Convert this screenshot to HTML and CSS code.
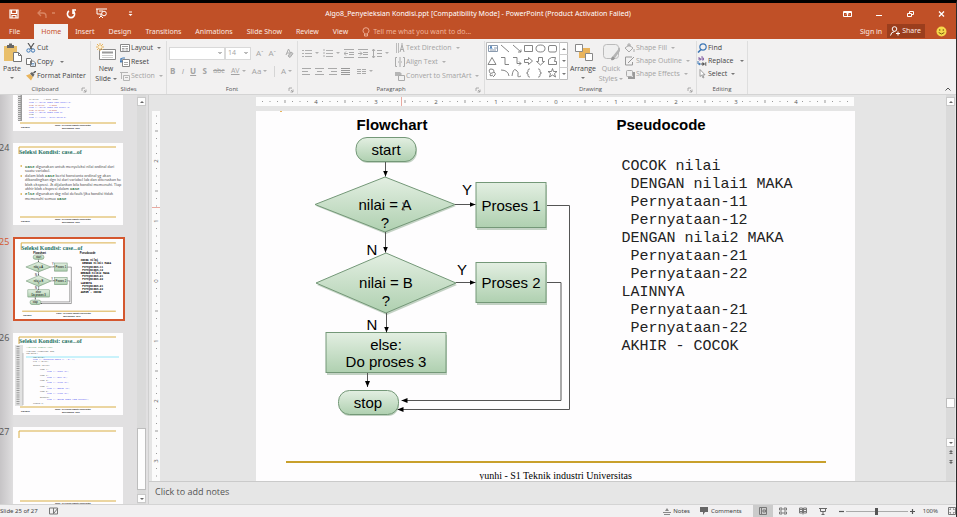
FILE: index.html
```html
<!DOCTYPE html>
<html lang="en">
<head>
<meta charset="utf-8">
<title>Algo8_Penyeleksian Kondisi.ppt - PowerPoint</title>
<link rel="stylesheet" href="styles.css">
</head>
<body>
<svg class="defs" aria-hidden="true">
  <defs>
    <linearGradient id="green" x1="0" y1="0" x2="0" y2="1">
      <stop offset="0" stop-color="#e3efe2"/><stop offset="1" stop-color="#afd0b0"/>
    </linearGradient>
    <marker id="arrow" viewBox="0 0 6 6" refX="6" refY="3" markerWidth="6" markerHeight="6" markerUnits="userSpaceOnUse" orient="auto"><path d="M0 .5 6 3 0 5.500z"/></marker>
    <g id="flowchart">
      <text class="fc-head" x="392" y="130">Flowchart</text>
      <g class="fc-shade">
        <rect x="357" y="139" width="60" height="24" rx="11"/>
        <path d="M316 206 386 179 456 206 386 234z"/>
        <path d="M317 285 387 255 457 285 387 315z"/>
        <rect x="477" y="185" width="70" height="45"/>
        <rect x="477" y="265" width="70" height="40"/>
        <rect x="327" y="335" width="120" height="40"/>
        <rect x="339" y="392" width="60" height="24" rx="11"/>
      </g>
      <g class="fc-node">
        <rect x="356" y="137.500" width="60" height="24" rx="11"/>
        <path d="M315 204.500 385 177 455 204.500 385 232z"/>
        <path d="M316 283 386 253 456 283 386 313z"/>
        <rect x="476" y="182.500" width="70" height="45"/>
        <rect x="476" y="262.500" width="70" height="40"/>
        <rect x="326" y="332.500" width="120" height="40"/>
        <rect x="338.500" y="390.500" width="60" height="24" rx="11"/>
      </g>
      <g class="fc-line">
        <path d="M385.500 162V176.500"/><path d="M385.500 232V252.500"/><path d="M386.500 313V332.500"/>
        <path d="M367.500 373V387"/><path d="M455 204.500H475.500"/><path d="M456 282.500H475.500"/>
        <path d="M547 205.500H569.500V409.500H397.500"/><path d="M547 282.500H561V400.500H401.500"/>
      </g>
      <g class="fc-text">
        <text x="386" y="155">start</text>
        <text x="385" y="210">nilai = A</text><text x="385" y="228">?</text>
        <text x="386" y="288">nilai = B</text><text x="386" y="306">?</text>
        <text x="511" y="211">Proses 1</text><text x="511" y="288">Proses 2</text>
        <text x="386" y="350">else:</text><text x="386" y="367">Do proses 3</text>
        <text x="368" y="408">stop</text>
        <text x="467" y="195">Y</text><text x="462" y="275">Y</text>
        <text x="372" y="255">N</text><text x="372" y="330">N</text>
      </g>
    </g>
    <g id="slide-frame">
      <path d="M6 11V4H103M7 74H103" fill="none" stroke="#d9ae45"/>
      <g class="t-foot"><text x="8" y="79">9/27/2011</text><text x="42" y="77">yunhi - S1 Teknik industri Universitas</text><text x="49" y="80">Mercubuana - 2011</text></g>
    </g>
    <pattern id="ticks-h" x="299" width="60" height="9" patternUnits="userSpaceOnUse"><path d="M7.500 4v1M15 4v1M22.500 4v1M30 3v3M37.500 4v1M45 4v1M52.500 4v1" stroke="#999"/></pattern>
    <pattern id="ticks-v" y="170" width="8" height="60" patternUnits="userSpaceOnUse"><path d="M4 7.500h1M4 15h1M4 22.500h1M3 30h3M4 37.500h1M4 45h1M4 52.500h1" stroke="#999"/></pattern>
  </defs>
</svg>

<header class="top">
  <div class="titlebar">
    <div class="qat">
      <button aria-label="Save"><svg width="10" height="10" viewBox="0 0 10 10"><path d="M1 1h8v8H1zM2.500 1v3.500h5V1M3 9V6.500h4V9" fill="none" stroke="#fff" stroke-width="1.200"/></svg></button>
      <button class="q-undo" aria-label="Undo"><svg width="18" height="10" viewBox="0 0 18 10"><path d="M4 1 1 4l3 3M1 4h5q3 0 3 3v2M15 4h3" fill="none" stroke="#d98563" stroke-width="1.300"/></svg></button>
      <button class="q-redo" aria-label="Repeat"><svg width="10" height="10" viewBox="0 0 10 10"><path d="M3 2A3.600 3.600 0 1 0 7 2M7 5V1h3" fill="none" stroke="#fff" stroke-width="1.600"/></svg></button>
      <button class="q-show" aria-label="Start slide show"><svg width="11" height="11" viewBox="0 0 11 11"><path d="M0 1h11M1 1v5h5M3 3h4M5 6v2M3 10l2-2 2 2" fill="none" stroke="#fff"/><circle cx="8" cy="5.500" r="2.300" fill="none" stroke="#fff"/></svg></button>
      <button class="q-more" aria-label="Customize toolbar"><svg width="5" height="6" viewBox="0 0 5 6"><path d="M1 1h3" stroke="#fff"/><path d="M.5 3h4l-2 2z" fill="#fff"/></svg></button>
    </div>
    <h1>Algo8_Penyeleksian Kondisi.ppt [Compatibility Mode] - PowerPoint (Product Activation Failed)</h1>
    <div class="winbtns">
      <button aria-label="Ribbon display options"><svg width="9" height="8" viewBox="0 0 9 8"><path d="M.5 1.500h8v5h-8zM.5 2.500h8M4.500 6V3M3 4.500 4.500 3 6 4.500" fill="none" stroke="#fff"/></svg></button>
      <button aria-label="Minimize"><svg width="7" height="8" viewBox="0 0 7 8"><path d="M0 5.500h6" stroke="#fff"/></svg></button>
      <button aria-label="Restore"><svg width="7" height="8" viewBox="0 0 7 8"><path d="M.5 3.500h4v3h-4zM2.500 3V1.500h4v3H5" fill="none" stroke="#fff"/></svg></button>
      <button aria-label="Close"><svg width="7" height="8" viewBox="0 0 7 8"><path d="M1 1.500l5 5M6 1.500l-5 5" stroke="#fff" stroke-width="1.300"/></svg></button>
    </div>
  </div>
  <nav class="tabs">
    <button class="file">File</button><button class="on">Home</button><button>Insert</button><button>Design</button><button>Transitions</button><button>Animations</button><button>Slide Show</button><button>Review</button><button>View</button>
    <label class="tell"><svg width="8" height="10" viewBox="0 0 8 10"><path d="M2.500 6.500Q1 5 1 3.700a3 3 0 0 1 6 0Q7 5 5.500 6.500V9h-3zM2.500 7h3" fill="none" stroke="#f0b49b" stroke-width=".9"/></svg><input type="text" placeholder="Tell me what you want to do..."></label>
    <a class="signin" href="#">Sign in</a>
    <button class="share"><svg width="10" height="10" viewBox="0 0 10 10"><circle cx="4.500" cy="3" r="2.300" fill="none" stroke="#fff"/><path d="M.5 9.500Q1 6 4.500 5.500M6 7.500h4M8 5.500v4" fill="none" stroke="#fff"/></svg>Share</button>
    <svg class="smile" width="11" height="11" viewBox="0 0 11 11"><circle cx="5.500" cy="5.500" r="5" fill="#f6d84a"/><circle cx="3.700" cy="4" r=".8" fill="#7a5a10"/><circle cx="7.300" cy="4" r=".8" fill="#7a5a10"/><path d="M2.700 6.500Q5.500 9.500 8.300 6.500" fill="none" stroke="#7a5a10"/></svg>
  </nav>
</header>

<section class="ribbon">
  <div class="group clip">
    <div class="tools">
      <button class="big"><svg width="19" height="20" viewBox="0 0 19 20"><rect x="1" y="3" width="13" height="15" fill="#e9bf6b"/><path d="M4 2h7v3H4zM6 .5h3V2H6z" fill="#666"/><path d="M10.500 9.500h5l3 3v6h-8z" fill="#fff" stroke="#777"/><path d="M15.500 9.500v3h3" fill="none" stroke="#777"/></svg><span>Paste</span><i></i></button>
      <div class="stack">
        <button><svg viewBox="0 0 10 10"><path d="M2 0l4 6M8 0 4 6" stroke="#555" stroke-width="1.200"/><circle cx="2.500" cy="7.500" r="1.700" fill="none" stroke="#3f78b5"/><circle cx="7" cy="7.500" r="1.700" fill="none" stroke="#3f78b5"/></svg>Cut</button>
        <button><svg viewBox="0 0 10 10"><path d="M.5 1.500h4l1 1v5h-5zM4.500 4h3l2 2v3.500h-5z" fill="#fff" stroke="#777"/><path d="M5.500 6.500h3M5.500 8h3" stroke="#3f78b5" stroke-width=".7"/></svg>Copy<i class="far"></i></button>
        <button><svg viewBox="0 0 10 10"><path d="M0 4.500 4 3l3 3-2 3.500z" fill="#e9b45c"/><path d="M4 2.500 6 1l2.500 2.500L7 6z" fill="#666"/><path d="M7.500 2 10 0" stroke="#555" stroke-width="1.500"/></svg>Format Painter</button>
      </div>
    </div>
    <h2>Clipboard</h2><svg class="launch" viewBox="0 0 6 6"><use href="#launcher"/></svg>
  </div>
  <div class="group slides">
    <div class="tools">
      <button class="big"><svg width="20" height="20" viewBox="0 0 20 20"><path d="M3.500 6.500h16v10h-16z" fill="#fff" stroke="#888"/><path d="M6 9.500h11" stroke="#999" stroke-width="2"/><path d="M6 12.500h11M6 14.500h11" stroke="#ccc"/><path d="M4 0v8M0 4h8M1 1l6 6M7 1 1 7" stroke="#e9b45c"/><circle cx="4" cy="4" r="1.500" fill="#fff3d6"/></svg><span>New<br>Slide <i></i></span></button>
      <div class="stack">
        <button><svg viewBox="0 0 10 10"><path d="M.5 1.500h9v7h-9z" fill="#fff" stroke="#888"/><path d="M2 3.500h6M2 5.500h2.500M5.500 5.500H8M2 7h2.500M5.500 7H8" stroke="#888" stroke-width=".8"/></svg>Layout<i></i></button>
        <button><svg viewBox="0 0 10 10"><path d="M2.500 2.500h7v7h-7z" fill="#fff" stroke="#888"/><path d="M4 5.500h4M4 7.500h4" stroke="#aaa"/><path d="M1 5V2.500Q1 1 3 1h2M1 1v4M0 4l1 1.500L2.500 4" fill="none" stroke="#3f78b5"/></svg>Reset</button>
        <button class="off"><svg viewBox="0 0 10 10"><path d="M3.500 4.500h6v5h-6zM0 1.500h8M1.500 2v6" fill="none" stroke="#b5b5b5"/><path d="M5 6.500h3" stroke="#b5b5b5"/></svg>Section<i></i></button>
      </div>
    </div>
    <h2>Slides</h2>
  </div>
  <div class="group font">
    <div class="tools col">
      <div class="line">
        <select class="face" aria-label="Font"><option></option></select><select class="size" aria-label="Font size"><option>14</option></select>
        <button class="g8">A<sup>ˆ</sup></button><button class="g8">A<sup>ˇ</sup></button>
        <button class="clear" aria-label="Clear formatting"><svg width="9" height="10" viewBox="0 0 9 10"><path d="M1 7 3.500 1 6 6M2 5h3" fill="none" stroke="#aaa"/><path d="M3 8l3-4 2 1.500-3 4z" fill="#c8c8c8" stroke="#aaa"/></svg></button>
      </div>
      <div class="line glyphs">
        <button><b>B</b></button><button><em>I</em></button><button><u><b>U</b></u></button><button><b>S</b></button><button><s>abc</s></button><button><u>AV</u><i></i></button><button>Aa<i></i></button><span class="bar"></span><button>A<i></i></button>
      </div>
    </div>
    <h2>Font</h2><svg class="launch" viewBox="0 0 6 6"><use href="#launcher"/></svg>
  </div>
  <div class="group para">
    <div class="tools">
      <div class="col paracol">
        <div class="line">
          <button aria-label="Bullets"><svg width="10" height="9" viewBox="0 0 10 9"><path d="M0 1.500h2M0 4.500h2M0 7.500h2M3 1.500h7M3 4.500h7M3 7.500h7" stroke="#b0b0b0"/></svg><i></i></button>
          <button aria-label="Numbering"><svg width="10" height="9" viewBox="0 0 10 9"><path d="M1 0v9" stroke="#b0b0b0" stroke-dasharray="2 1"/><path d="M3 1.500h7M3 4.500h7M3 7.500h7" stroke="#b0b0b0"/></svg><i></i></button>
          <button aria-label="Decrease indent"><svg width="10" height="9" viewBox="0 0 10 9"><path d="M0 .5h10M5 3.500h5M5 5.500h5M0 8.500h10M4 4.500H0M2 2.500l-2 2 2 2" fill="none" stroke="#aaa"/></svg></button>
          <button aria-label="Increase indent"><svg width="10" height="9" viewBox="0 0 10 9"><path d="M0 .5h10M5 3.500h5M5 5.500h5M0 8.500h10M0 4.500h4M2 2.500l2 2-2 2" fill="none" stroke="#aaa"/></svg></button>
          <button aria-label="Line spacing"><svg width="10" height="9" viewBox="0 0 10 9"><path d="M1.500 0v9M0 2l1.500-2L3 2M0 7l1.500 2L3 7M5 1.500h5M5 4.500h5M5 7.500h5" fill="none" stroke="#aaa"/></svg><i></i></button>
        </div>
        <div class="line aligns">
          <button aria-label="Align left"><svg width="9" height="7" viewBox="0 0 9 7"><path d="M0 .5h9M0 3.500h6M0 6.500h8" stroke="#aaa"/></svg></button>
          <button aria-label="Center"><svg width="9" height="7" viewBox="0 0 9 7"><path d="M0 .5h9M2 3.500h5M0 6.500h9" stroke="#aaa"/></svg></button>
          <button aria-label="Align right"><svg width="9" height="7" viewBox="0 0 9 7"><path d="M0 .5h9M3 3.500h6M1 6.500h8" stroke="#aaa"/></svg></button>
          <button aria-label="Justify"><svg width="9" height="7" viewBox="0 0 9 7"><path d="M0 .5h9M0 2.500h9M0 4.500h9M0 6.500h9" stroke="#999"/></svg></button>
          <button class="cols" aria-label="Columns"><svg width="9" height="7" viewBox="0 0 9 7"><path d="M0 1.500h4M5 1.500h4M0 3.500h4M5 3.500h4M0 5.500h4M5 5.500h4" stroke="#aaa"/></svg><i></i></button>
        </div>
      </div>
      <div class="stack off">
        <button><svg viewBox="0 0 10 10"><path d="M1.500 0v10M3.500 0v10" stroke="#bbb"/><path d="M5 9 7 2l2 7M5.500 6.500h3M7 0v2" fill="none" stroke="#aaa"/></svg>Text Direction<i></i></button>
        <button><svg viewBox="0 0 10 10"><path d="M2 .5H.5v9H2M8 .5h1.500v9H8M5 0v4M5 6v4M3 5h4" fill="none" stroke="#aaa"/></svg>Align Text<i></i></button>
        <button><svg viewBox="0 0 10 10"><path d="M0 1h5l2 2-2 2H0z" fill="#b5b5b5"/><path d="M3.500 4.500h6v5h-6z" fill="#f1f1f1" stroke="#aaa"/></svg>Convert to SmartArt<i></i></button>
      </div>
    </div>
    <h2>Paragraph</h2><svg class="launch" viewBox="0 0 6 6"><use href="#launcher"/></svg>
  </div>
  <div class="group draw">
    <div class="tools">
      <svg class="gallery" width="82" height="38" viewBox="0 0 82 38">
        <path d="M.5.500h81v37H.5z" fill="#fff" stroke="#bbb"/>
        <path d="M73.500 0v38M73 12.500h9M73 25.500h9" stroke="#ccc"/>
        <path d="M76 8h4l-2-2zM76 18h4l-2 2zM76 30h4M76 31h4l-2 2z" fill="#777"/>
        <g fill="none" stroke="#777" stroke-width=".9"><path d="M2.500 3.500h9v6h-9zM8 6h3M4 8h6" stroke="#7d8fa5"/><path d="M4 7l1-3 1 3" stroke="#3f78b5"/><path d="M15 3l8 7M27 3l8 7M35 7.500V10h-3M38.500 3.500h8v6h-8z"/><ellipse cx="54.500" cy="6.500" rx="4.500" ry="3.500"/><rect x="62.500" y="3.500" width="8" height="6.500" rx="1.500"/>
        <path d="M2 22.500 6 15.500l4 7zM15 15.500h4v7h4M27 15.500h4v6h4M33 19.500l2 2-2 2M38.500 17.500h4v-2l4 3.500-4 3.500v-2h-4zM52.500 15.500h4v4h2l-4 3.500-4-3.500h2zM62.500 22.500v-5l3-2h4l-1 4h2v3z"/>
        <path d="M4 31q-2-4 1-4t3 2-2 2-2 2 3 0M8 30q2 1 1 3l-2 2M15 28q7 0 8 6M26 34q1-8 4-6t2 5 3 1M44 27h-.5q-1.500 0-1.500 1.500v1.500l-1.500 1 1.500 1v1.500q0 1.500 1.500 1.500h.5M52 27h.5q1.500 0 1.500 1.500v1.500l1.500 1-1.500 1v1.500q0 1.500-1.500 1.500h-.5M66.500 26.500l1 3h3.500l-2.500 2 1 3.500-3-2-3 2 1-3.500-2.500-2h3.500z"/></g>
      </svg>
      <button class="big arrange"><svg width="19" height="20" viewBox="0 0 19 20"><path d="M5 5h11v10H5z" fill="#e9b45c"/><path d="M1.500 1.500h7v7h-7zM11.500 10.500h7v7h-7z" fill="#fff" stroke="#888"/></svg><span>Arrange</span><i></i></button>
      <button class="big off"><svg width="19" height="20" viewBox="0 0 19 20"><rect x="1.500" y="1.500" width="15" height="14" rx="3" fill="#efefef" stroke="#bbb"/><path d="M18 4 11 13l2 2 5-7z" fill="#b5b5b5"/><path d="M11 13q-2 1-2 4 3 1 4-2z" fill="#999"/></svg><span>Quick<br>Styles <i></i></span></button>
      <div class="stack off tight">
        <button><svg viewBox="0 0 10 10"><path d="M4 2l4 3-4 4-4-4zM3 4V1h2v3M9 6v3" fill="none" stroke="#aaa"/></svg>Shape Fill<i></i></button>
        <button><svg viewBox="0 0 10 10"><path d="M7 1H.5v8h7V6M3 7l6-6" fill="none" stroke="#999"/></svg>Shape Outline<i></i></button>
        <button><svg viewBox="0 0 10 10"><path d="M3 9h6V3" fill="none" stroke="#999" stroke-width="2"/><rect x="1.500" y="1.500" width="6" height="6" rx="1" fill="#eee" stroke="#aaa"/></svg>Shape Effects<i></i></button>
      </div>
    </div>
    <h2>Drawing</h2><svg class="launch" viewBox="0 0 6 6"><use href="#launcher"/></svg>
  </div>
  <div class="group edit">
    <div class="tools">
      <div class="stack tight">
        <button><svg viewBox="0 0 10 10"><circle cx="6" cy="4" r="3.200" fill="none" stroke="#3f78b5" stroke-width="1.200"/><path d="M4 6.500 1 9.500" stroke="#3f78b5" stroke-width="1.600"/></svg>Find</button>
        <button><svg viewBox="0 0 10 10"><path d="M2 1v3h1.500V2.500H2M5 0v4h1.500V2H5" fill="none" stroke="#8a6aa8"/><path d="M1 5v3h2M2 7l1.500 1L2 9" fill="none" stroke="#3f78b5"/><path d="M5 7h1.500v2H5zM9.500 7H8v2h1.500" fill="none" stroke="#555"/></svg>Replace<i class="far"></i></button>
        <button><svg viewBox="0 0 10 10"><path d="M3 .5v7l1.700-1.500L6 9l1-.5-1.300-2.700H8z" fill="#fff" stroke="#888" stroke-width=".8"/></svg>Select<i></i></button>
      </div>
    </div>
    <h2>Editing</h2>
  </div>
  <button class="collapse" aria-label="Collapse ribbon"><svg width="6" height="4" viewBox="0 0 6 4"><path d="M.5 3.500 3 1l2.500 2.500" fill="none" stroke="#555"/></svg></button>
  <svg class="defs"><defs><path id="launcher" d="M1 4V1h3M3 3l2 2M5 2.500V5H2.500" fill="none" stroke="#999" stroke-width=".8"/></defs></svg>
</section>

<main class="work">
  <aside class="pane">
    <ol class="thumbs">
      <li><span></span><svg viewBox="0 0 110 82"><use href="#slide-frame"/><path d="M7 12v60" stroke="#999" stroke-width="4"/><path d="M6 12v60" stroke="#ddd" stroke-width="3" stroke-dasharray="1 1"/>
        <g class="t-code"><text x="16" y="51">if nilai == 1 then 'Satu'</text><text x="16" y="54" class="bl">cout &lt;&lt; "nilai angka satu sekali n"</text><text x="16" y="57" class="rd">else if nilai == 2 then</text><text x="16" y="59" class="bl">cout &lt;&lt; "nilai angka dua sekali n"</text><text x="16" y="62" class="rd">else if nilai == 3 then</text><text x="16" y="64" class="bl">cout &lt;&lt; "Nilai angka tiga n"</text><text x="16" y="66">else</text><text x="16" y="69" class="bl">cout &lt;&lt; "Akhir - nilai salah n"</text></g></svg></li>
      <li><span>24</span><svg viewBox="0 0 110 82"><use href="#slide-frame"/><text class="t-title" x="6" y="11">Seleksi Kondisi: case...of</text>
        <path d="M7.500 23h1.500M7.500 33h1.500M7.500 51h1.500" stroke="#d9ae45" stroke-width="1.500"/>
        <g class="t-body"><text x="12" y="25"><tspan>case</tspan> digunakan untuk menyeleksi nilai ordinal dari</text><text x="12" y="29">suatu variabel.</text><text x="12" y="34">dalam blok <tspan>case</tspan> berisi konstanta ordinal yg akan</text><text x="12" y="38">dibandingkan dgn isi dari variabel lab dan diteruskan ke</text><text x="12" y="43">blok ekspresi. Jk dijalankan bila kondisi memenuhi. Tiap</text><text x="12" y="47">akhir blok ekspresi dalam <tspan>case</tspan></text><text x="12" y="52"><tspan>else</tspan> digunakan sbg nilai default/jika kondisi tidak</text><text x="12" y="57">memenuhi semua <tspan>case</tspan></text></g></svg></li>
      <li class="sel"><span>25</span><svg viewBox="0 0 110 82"><use href="#slide-frame"/><text class="t-title" x="6" y="11">Seleksi Kondisi: case...of</text>
        <g class="mini" transform="scale(.183) translate(-256 -48)"><use href="#flowchart"/><text class="mini-head" x="617" y="130">Pseudocode</text>
          <g class="mini-code"><text x="622" y="172">COCOK nilai</text><text x="631" y="190">DENGAN nilai1 MAKA</text><text x="631" y="208">Pernyataan-11</text><text x="631" y="226">Pernyataan-12</text><text x="622" y="244">DENGAN nilai2 MAKA</text><text x="631" y="262">Pernyataan-21</text><text x="631" y="280">Pernyataan-22</text><text x="622" y="298">LAINNYA</text><text x="631" y="316">Pernyataan-21</text><text x="631" y="334">Pernyataan-22</text><text x="622" y="352">AKHIR - COCOK</text></g></g></svg></li>
      <li><span>26</span><svg viewBox="0 0 110 82"><use href="#slide-frame"/><text class="t-title" x="6" y="10">Seleksi Kondisi: case...of</text><path d="M6 12v61" stroke="#e2e2e2" stroke-width="8"/><path d="M5 13v59" stroke="#999" stroke-width="3" stroke-dasharray="1 1.200"/><path d="M10 20v52" stroke="#999" stroke-width=".6"/><path d="M13 24h93" stroke="#c9f2fb" stroke-width="2"/>
        <g class="t-code"><text x="13" y="15" class="gr">//Seleksi Kondisi case</text><text x="13" y="19">#include &lt;iostream&gt; std;</text><text x="13" y="21">int main()</text><text x="20" y="25">int nilai;</text><text x="20" y="27" class="bl">cout &lt;&lt; "Masukkan angka (1 - 5) :";</text><text x="20" y="29">cin &gt;&gt; nilai;</text><text x="20" y="33">switch (nilai)</text><text x="27" y="37">case 1:</text><text x="34" y="39" class="bl">cout &lt;&lt; "Satu \n";</text><text x="27" y="43">case 2:</text><text x="34" y="45" class="bl">cout &lt;&lt; "Dua \n";</text><text x="27" y="48">case 3:</text><text x="34" y="50" class="bl">cout &lt;&lt; "Tiga \n";</text><text x="27" y="54">case 4:</text><text x="34" y="56" class="bl">cout &lt;&lt; "Empat \n";</text><text x="27" y="59">case 5:</text><text x="34" y="61" class="bl">cout &lt;&lt; "Lima \n";</text><text x="27" y="65">default:</text><text x="34" y="67" class="bl">cout &lt;&lt; "Bukan angka yang dikenal";</text><text x="20" y="71">return 0;</text></g></svg></li>
      <li><span>27</span><svg viewBox="0 0 110 82"><use href="#slide-frame"/></svg></li>
    </ol>
    <div class="scroll"><button aria-label="Scroll up"><b class="up"></b></button><div class="track"><div class="knob"></div></div><button aria-label="Scroll down"><b class="down"></b></button></div>
  </aside>

  <section class="editor">
    <div class="canvas">
      <svg class="vruler" width="8" height="370" viewBox="0 0 8 370"><path d="M0 0h8v370H0z" fill="#fbfbfb"/><path d="M0 0h8v370H0z" fill="url(#ticks-v)"/><path d="M0 96.500h8" stroke="#e9a9a0"/>
        <g class="rnum"><text transform="translate(6 50) rotate(-90)">2</text><text transform="translate(6 110) rotate(-90)">1</text><text transform="translate(6 170) rotate(-90)">0</text><text transform="translate(6 230) rotate(-90)">1</text><text transform="translate(6 290) rotate(-90)">2</text><text transform="translate(6 350) rotate(-90)">3</text></g></svg>
      <div class="stage">
        <svg class="hruler" width="598" height="9" viewBox="0 0 598 9"><path d="M0 0h598v9H0z" fill="#fcfcfc"/><path d="M0 0h598v9H0z" fill="url(#ticks-h)"/><path d="M145.500 0v9" stroke="#e9a9a0"/>
          <g class="rnum"><text x="60" y="7">4</text><text x="120" y="7">3</text><text x="180" y="7">2</text><text x="240" y="7">1</text><text x="300" y="7">0</text><text x="360" y="7">1</text><text x="420" y="7">2</text><text x="480" y="7">3</text><text x="540" y="7">4</text></g></svg>
        <article class="slide">
          <svg class="chart" width="361" height="350" viewBox="256 111 361 350"><use href="#flowchart"/><path d="M280 111h2v1h-2z" fill="#e9b45c"/><path d="M402 203h3M403.500 203v7M402 210h3" stroke="#555" stroke-width=".8" fill="none"/></svg>
          <div class="pseudo">
            <h3>Pseudocode</h3>
<pre>COCOK nilai
 DENGAN nilai1 MAKA
 Pernyataan-11
 Pernyataan-12
DENGAN nilai2 MAKA
 Pernyataan-21
 Pernyataan-22
LAINNYA
 Pernyataan-21
 Pernyataan-22
AKHIR - COCOK</pre>
          </div>
          <footer>yunhi - S1 Teknik industri Universitas</footer>
        </article>
      </div>
      <div class="scroll main"><button aria-label="Scroll up"><b class="up"></b></button><div class="track"><div class="knob"></div></div><button aria-label="Scroll down"><b class="down"></b></button>
        <button class="nav" aria-label="Previous slide"><b class="up"></b><b class="up"></b></button><button class="nav" aria-label="Next slide"><b class="down"></b><b class="down"></b></button></div>
    </div>
    <div class="notes">Click to add notes</div>
  </section>
</main>

<footer class="status">
  <span>Slide 25 of 27</span>
  <svg class="proof" width="10" height="8" viewBox="0 0 10 8"><path d="M.5 1h4v6h-4zM4.500 1h4v6h-4zM5 6l4-5" fill="none" stroke="#777"/></svg>
  <button class="s-notes"><svg width="8" height="7" viewBox="0 0 8 7"><path d="M0 4.500h8M1 6.500h6" stroke="#888"/><path d="M2 3h4L4 0z" fill="#888"/></svg>Notes</button>
  <button class="s-comments"><svg width="8" height="8" viewBox="0 0 8 8"><path d="M0 0h8v5H5L3 8V5H0z" fill="#666"/></svg>Comments</button>
  <div class="views">
    <button class="on" aria-label="Normal"><svg width="8" height="8" viewBox="0 0 8 8"><path d="M.5.500h7v7h-7zM2.500 1v6M4 3h2.500v2H4z" fill="none" stroke="#777"/></svg></button>
    <button aria-label="Slide sorter"><svg width="8" height="8" viewBox="0 0 8 8"><path d="M.5 1h2.500v2H.5zM5 1h2.500v2H5zM.5 5h2.500v2H.5zM5 5h2.500v2H5z" fill="none" stroke="#777"/></svg></button>
    <button aria-label="Reading view"><svg width="8" height="8" viewBox="0 0 8 8"><path d="M.5 1h3v5h-3zM4.500 1h3v5h-3zM4 1v6.500M1 2.500h2M1 4.500h2M5 2.500h2M5 4.500h2" fill="none" stroke="#777"/></svg></button>
    <button aria-label="Slide show"><svg width="8" height="8" viewBox="0 0 8 8"><path d="M0 1.500h8M1.500 2v2.500h5V2M4 5v2M2.500 7.500h3" fill="none" stroke="#666"/></svg></button>
  </div>
  <button aria-label="Zoom out"><svg width="5" height="5" viewBox="0 0 5 5"><path d="M0 2.500h5" stroke="#555" stroke-width="1.200"/></svg></button>
  <input type="range" aria-label="Zoom" min="0" max="100" value="50">
  <button aria-label="Zoom in"><svg width="5" height="5" viewBox="0 0 5 5"><path d="M0 2.500h5M2.500 0v5" stroke="#555" stroke-width="1.200"/></svg></button>
  <span class="pct">100%</span>
  <button aria-label="Fit slide"><svg width="8" height="8" viewBox="0 0 8 8"><path d="M.5.500h7v7h-7zM2 3V2h1M5 2h1v1M6 5v1H5M3 6H2V5" fill="none" stroke="#777"/></svg></button>
</footer>
</body>
</html>
```
FILE: styles.css
```css
* { box-sizing: border-box; }
body {
  margin: 0;
  height: 100vh;
  display: flex;
  flex-direction: column;
  overflow: hidden;
  border-top: 3px solid #000;
  border-right: 1px solid #2c2c2c;
  background: #e5e5e5;
  color: #444;
  font-family: "Open Sans", "Noto Sans", sans-serif;
  font-size: 7px;
  line-height: 10px;
}
button, input, select { margin: 0; padding: 0; border: 0; background: none; color: inherit; font: inherit; }
button { display: flex; align-items: center; white-space: nowrap; }
h1, h2, h3, pre, ol { margin: 0; padding: 0; font-weight: 400; font-size: inherit; }
svg { flex: none; display: block; }
.defs { position: absolute; width: 0; height: 0; }
i { flex: none; display: inline-block; border: 2px solid transparent; border-top-color: #777; border-bottom: 0; margin-left: 3px; vertical-align: middle; }
i.far { margin-left: 6px; }

/* title bar and tabs */
.top { background: #c05027; color: #fbe9e2; font-family: "Noto Sans", "Open Sans", sans-serif; }
.titlebar { display: grid; grid-template-columns: 1fr auto 1fr; align-items: center; height: 21px; }
.titlebar h1 { font-size: 7px; color: #fff; }
.qat { display: flex; align-items: center; padding-left: 9px; }
.q-undo { margin-left: 18px; }
.q-redo { margin-left: 11px; }
.q-show { margin-left: 20px; }
.q-more { margin-left: 21px; }
.winbtns { display: flex; justify-content: flex-end; gap: 24px; padding-right: 11px; }
.tabs { display: flex; align-items: stretch; height: 15px; }
.tabs > button { padding: 0 7px; }
.tabs .file { padding: 0 14px 0 9px; }
.tabs .on { background: #f4f2f2; color: #c8512a; }
.tell { display: flex; align-items: center; gap: 3px; flex: 1; margin-left: 7px; }
.tell input { flex: 1; min-width: 0; outline: 0; }
.tell input::placeholder { color: #f0b49b; opacity: 1; }
.signin { color: inherit; text-decoration: none; align-self: center; margin-right: 5px; }
.tabs .share { background: #9b3e1d; gap: 2px; padding: 0 4px 0 3px; margin-bottom: 1px; }
.smile { align-self: center; margin: 0 9px 0 11px; }

/* ribbon */
.ribbon { position: relative; display: flex; height: 56px; padding-top: 2px; background: #f2f1f1; border-bottom: 1px solid #d4d4d4; }
.group { position: relative; display: grid; grid-template-rows: 43px 10px; border-right: 1px solid #dedede; }
.group h2 { padding-top: 1px; text-align: center; font-size: 6px; line-height: 8px; color: #555; }
.launch { position: absolute; right: 3px; bottom: 1px; width: 6px; height: 6px; }
.clip { width: 91px; }
.slides { width: 76px; }
.font { width: 131px; }
.para { width: 187px; }
.draw { width: 212px; }
.edit { width: 51px; }
.tools { display: flex; }
.tools.col, .col { display: flex; flex-direction: column; }
.big { flex-direction: column; width: 24px; padding-top: 2px; line-height: 10px; text-align: center; }
.big > span { padding-top: 1px; }
.big > i { margin: 3px 0 0; }
.big span i { margin-left: 0; }
.slides .big { width: 28px; margin-left: 1px; }
.stack button { height: 14px; gap: 1px; }
.stack svg { width: 10px; height: 10px; }
.stack.tight button { height: 13px; }
.clip .stack { padding-left: 2px; }
.off, .font, .aligns { color: #a3a3a3; }
.off i, .font i, .paracol i { border-top-color: #b0b0b0; }
.line { display: flex; align-items: center; height: 22px; }
.font .col { padding: 1px 0 0 2px; }
.line select { appearance: none; height: 13px; border: 1px solid #d9d9d9; background: #fff; font-size: 7px; padding-left: 2px;
  background-image: linear-gradient(45deg, transparent 50%, #bbb 50%), linear-gradient(-45deg, transparent 50%, #bbb 50%);
  background-size: 2px 2px; background-repeat: no-repeat; background-position: right 4px center, right 2px center; }
.face { width: 56px; }
.size { width: 26px; }
.g8 { font-size: 8px; margin-left: 5px; }
.g8 sup { font-size: 6px; line-height: 6px; }
.clear { margin-left: 9px; }
.font .glyphs { font-size: 8px; height: 14px; justify-content: space-between; padding: 0 5px 0 1px; }
.glyphs s, .glyphs button:nth-child(6) { font-size: 7px; }
.glyphs i { margin-left: 2px; }
.bar { width: 1px; height: 11px; background: #d5d5d5; }
.paracol { width: 97px; padding: 1px 0 0 4px; }
.paracol .line { gap: 4px; }
.paracol .aligns { height: 14px; }
.paracol .cols { margin-left: 3px; }
.gallery { margin: 1px 0 0 1px; }
.arrange { width: 30px; }
.draw .big + .big { width: 26px; }
.draw .stack { padding-left: 1px; }
.collapse { position: absolute; right: 5px; bottom: 3px; }

/* workspace */
.work { flex: 1; display: flex; min-height: 0; }
.pane { width: 149px; display: flex; justify-content: space-between; overflow: hidden; background: linear-gradient(to right, #c6c4c6, #e1e0e1 14px); border-right: 1px solid #cfcfcf; padding-right: 2px; }
.thumbs { list-style: none; margin-top: -46px; display: flex; flex-direction: column; gap: 12px; }
.thumbs li { display: flex; flex: none; }
.thumbs span { width: 13px; font-size: 9px; line-height: 10px; color: #555; text-indent: -1px; }
.thumbs svg { width: 110px; height: 82px; background: #fefdfe; }
.thumbs .sel svg { width: 112px; height: 84px; border: 2px solid #d4572f; }
.thumbs .sel span { color: #d4572f; }
.t-title { font: bold 6px "Liberation Serif", serif; fill: #1e7263; }
.t-body { font: 4px Lato, sans-serif; fill: #555; }
.t-body tspan { font-family: "Liberation Mono", monospace; font-weight: 700; fill: #1d6b3a; }
.t-foot { font: bold 2px "Liberation Sans", sans-serif; fill: #222; }
.t-code { font: 2px "Liberation Mono", monospace; fill: #444; }
.bl { fill: #3c3cf0; }
.rd { fill: #a33; }
.gr { fill: #5a9a5a; }
.mini { stroke-width: 3px; }
.mini-head { font: bold 15px "Liberation Sans", sans-serif; fill: #000; }
.mini-code { font: bold 15px "Liberation Mono", monospace; fill: #000; }

.scroll { width: 9px; display: flex; flex-direction: column; padding: 2px 0 1px; background: #dadada; }
.scroll button { height: 9px; justify-content: center; background: #fdfdfd; border: 1px solid #c9c9c9; }
.track { flex: 1; display: flex; flex-direction: column; justify-content: flex-end; padding-bottom: 4px; }
.knob { height: 62px; background: #fdfdfd; border: 1px solid #bdbdbd; }
.up, .down { border: 2px solid transparent; }
.up { border-top: 0; border-bottom-color: #666; }
.down { border-bottom: 0; border-top-color: #666; }
.scroll.main { margin-right: 1px; padding-bottom: 14px; }
.scroll.main .track { padding-bottom: 30px; }
.scroll.main .knob { height: 10px; }
.scroll .nav { background: none; border: 0; flex-direction: column; height: 10px; }

.editor { flex: 1; display: flex; flex-direction: column; min-width: 0; }
.canvas { flex: 1; display: flex; min-height: 0; }
.vruler { margin: 16px 0 0 3px; }
.rnum { font: 6px "Open Sans", sans-serif; fill: #555; text-anchor: middle; }
.stage { flex: 1; min-width: 0; display: flex; flex-direction: column; align-items: center; padding: 2px 0 0 4px; }
.hruler { margin-bottom: 5px; }
.slide { flex: 1; min-height: 0; width: 599px; display: grid; grid-template-columns: 361px 1fr; grid-template-rows: 350px 19px; overflow: hidden; background: #fefdfe; color: #000; }
.pseudo h3 { font: bold 15px/18px "Liberation Sans", sans-serif; padding-top: 5px; }
.pseudo pre { font: 15px/18px "Liberation Mono", monospace; padding: 24px 0 0 5px; color: #222; }
.slide footer { grid-column: 1 / -1; margin: 0 29px 0 30px; border-top: 2px solid #c8a02c; padding-top: 7px; text-align: center; font: 10px/12px "Liberation Serif", serif; overflow: hidden; }

.fc-head { font: bold 15px "Liberation Sans", sans-serif; text-anchor: middle; }
.fc-text { font: 15px "Liberation Sans", sans-serif; text-anchor: middle; }
.fc-node { fill: url(#green); stroke: #749878; }
.fc-shade { fill: #9db79e; opacity: .6; }
.fc-line { fill: none; stroke: #555; }
.fc-line path { marker-end: url(#arrow); }

.notes { height: 23px; border-top: 1px solid #cacaca; padding: 0 6px; font-size: 9px; line-height: 20px; color: #555; background: #e6e6e6; }

/* status bar */
.status { display: flex; align-items: center; height: 13px; background: #f1f0f1; border-top: 1px solid #d4d4d4; font-family: "Noto Sans", "Open Sans", sans-serif; font-size: 6px; }
.proof { margin-left: 11px; }
.s-notes { margin-left: auto; gap: 2px; }
.s-comments { margin: 0 11px 0 10px; gap: 3px; }
.views { display: flex; align-self: stretch; margin-right: 6px; }
.views button { width: 20px; justify-content: center; }
.views .on { background: #cbcbcb; }
.status input { appearance: none; width: 62px; height: 9px; margin: 0 2px; background: linear-gradient(#aaa, #aaa) center / 100% 1px no-repeat; }
.status input::-webkit-slider-thumb { appearance: none; width: 3px; height: 7px; background: #555; }
.pct { margin: 0 10px 0 8px; }
```
